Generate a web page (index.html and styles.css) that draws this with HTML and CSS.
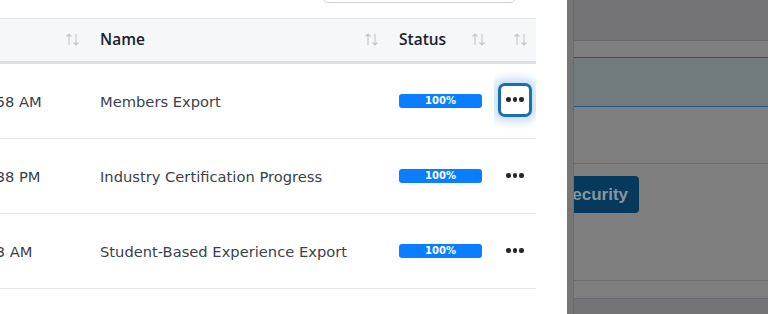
FILE: index.html
```html
<!DOCTYPE html>
<html>
<head>
<meta charset="utf-8">
<link rel="stylesheet" href="styles.css">
</head>
<body>
<div class="page">
  <div class="panel">
    <div class="toolbar"><div class="search"></div></div>
    <div class="table">
      <div class="row head">
        <div class="cell c1"><svg class="sort" viewBox="0 0 15 15"><path d="M4 2v11M1.5 4.5L4 2l2.5 2.5M11 2v11M8.5 10.5L11 13l2.5-2.5" fill="none" stroke="#c4c7ce" stroke-width="1.1"/></svg></div>
        <div class="cell c2"><span class="th">Name</span><svg class="sort" viewBox="0 0 15 15"><path d="M4 2v11M1.5 4.5L4 2l2.5 2.5M11 2v11M8.5 10.5L11 13l2.5-2.5" fill="none" stroke="#c4c7ce" stroke-width="1.1"/></svg></div>
        <div class="cell c3"><span class="th">Status</span><svg class="sort" viewBox="0 0 15 15"><path d="M4 2v11M1.5 4.5L4 2l2.5 2.5M11 2v11M8.5 10.5L11 13l2.5-2.5" fill="none" stroke="#c4c7ce" stroke-width="1.1"/></svg></div>
        <div class="cell c4"><svg class="sort" viewBox="0 0 15 15"><path d="M4 2v11M1.5 4.5L4 2l2.5 2.5M11 2v11M8.5 10.5L11 13l2.5-2.5" fill="none" stroke="#c4c7ce" stroke-width="1.1"/></svg></div>
      </div>
      <div class="row">
        <div class="cell c1 date"><span class="time">10:58 AM</span></div>
        <div class="cell c2">Members Export</div>
        <div class="cell c3"><span class="badge">100%</span></div>
        <div class="cell c4"><button class="dots focus"><i></i><i></i><i></i></button></div>
      </div>
      <div class="row">
        <div class="cell c1 date"><span class="time">12:38 PM</span></div>
        <div class="cell c2">Industry Certification Progress</div>
        <div class="cell c3"><span class="badge">100%</span></div>
        <div class="cell c4"><button class="dots"><i></i><i></i><i></i></button></div>
      </div>
      <div class="row">
        <div class="cell c1 date"><span class="time">9:03 AM</span></div>
        <div class="cell c2">Student-Based Experience Export</div>
        <div class="cell c3"><span class="badge">100%</span></div>
        <div class="cell c4"><button class="dots"><i></i><i></i><i></i></button></div>
      </div>
      <div class="row last"></div>
    </div>
  </div>
  <div class="overlay">
    <div class="edge"></div>
    <div class="behind">
      <div class="b-top"></div>
      <div class="b-gap"></div>
      <div class="b-band"></div>
      <div class="b-sec1"></div>
      <div class="b-sec2"><div class="sec-btn">ecurity</div></div>
      <div class="b-sec3"></div>
      <div class="b-bottom"></div>
    </div>
  </div>
</div>
</body>
</html>
```

FILE: styles.css
```css
* { box-sizing: border-box; }
html, body { margin: 0; padding: 0; }
body {
  width: 768px;
  height: 314px;
  overflow: hidden;
  font-family: "DejaVu Sans", "Open Sans", sans-serif;
  background: #fff;
}
.page { display: flex; height: 314px; overflow: hidden; }
.panel { width: 567px; flex: none; background: #fff; overflow: hidden; }
.toolbar {
  height: 18px;
  width: 536px;
  display: flex;
  justify-content: flex-end;
  align-items: flex-end;
  overflow: hidden;
  padding-right: 20px;
}
.search {
  width: 194px;
  height: 40px;
  margin-bottom: 15px;
  border: 1px solid #cfd2d8;
  border-radius: 6px;
  flex: none;
}
.table { width: 536px; }
.row {
  display: grid;
  grid-template-columns: 88px 299px 107px 42px;
  height: 75px;
  border-bottom: 1px solid #e4e5e8;
}
.row.head {
  height: 46px;
  background: #f6f7f9;
  border-top: 1px solid #e2e4e8;
  border-bottom: 3px solid #dfe0e5;
}
.row.last { border-bottom: none; height: 30px; }
.cell {
  display: flex;
  align-items: center;
  padding: 0 8px 0 12px;
  font-size: 14.7px;
  color: #3b3f49;
  white-space: nowrap;
  overflow: hidden;
}
.head .cell { justify-content: space-between; padding-bottom: 2px; }
.head .c1, .head .c4 { justify-content: flex-end; }
.th { font-weight: 600; color: #1c202b; font-family: "Open Sans", sans-serif; font-size: 15.5px; }
.sort { width: 15px; height: 15px; flex: none; }
.date { justify-content: flex-start; padding: 0; }
.time { margin-left: -28px; }
.badge {
  display: block;
  width: 83px;
  height: 14px;
  line-height: 14px;
  background: #0b7dff;
  color: #fff;
  border-radius: 3px;
  font-size: 10px;
  font-weight: 700;
  text-align: center;
}
.c4 { justify-content: center; padding: 0; }
.head .c4 { padding-right: 8px; }
.dots {
  width: 34px;
  height: 34px;
  border: 3px solid transparent;
  border-radius: 7px;
  background: #fff;
  display: flex;
  align-items: center;
  justify-content: center;
  gap: 2px;
  padding: 0;
  margin-top: -1px;
}
.dots i {
  display: block;
  width: 4.5px;
  height: 4.5px;
  border-radius: 50%;
  background: #23262d;
}
.dots.focus {
  border-color: #1a6fac;
  box-shadow: 0 0 8px 5px rgba(110, 175, 235, 0.4);
  margin-top: -3px;
}
.overlay { flex: 1; display: flex; background: #7f7f7f; }
.edge { width: 7px; background: #767676; border-right: 1px solid #6c6c6c; flex: none; }
.behind { flex: 1; display: flex; flex-direction: column; }
.b-top { height: 41px; background: #737376; border-bottom: 1px solid #6a6a6a; flex: none; }
.b-gap { height: 16px; flex: none; }
.b-band { height: 50px; background: #717a7d; border-top: 1px solid #1d5a85; border-bottom: 1px solid #1d5a85; flex: none; }
.b-sec1 { height: 57px; border-bottom: 1px solid #6c6c6c; flex: none; }
.b-sec2 { height: 117px; border-bottom: 1px solid #6c6c6c; padding-top: 12px; flex: none; }
.sec-btn {
  width: 65px;
  height: 37px;
  background: #053a5d;
  border-radius: 0 4px 4px 0;
  color: #8b959c;
  font-family: "Liberation Sans", sans-serif;
  font-weight: 700;
  font-size: 17px;
  line-height: 37px;
  text-align: right;
  padding-right: 11px;
  overflow: hidden;
  white-space: nowrap;
  direction: rtl;
}
.b-sec3 { height: 18px; border-bottom: 1px solid #6c6c6c; flex: none; }
.b-bottom { flex: 1; background: #737378; }
```
